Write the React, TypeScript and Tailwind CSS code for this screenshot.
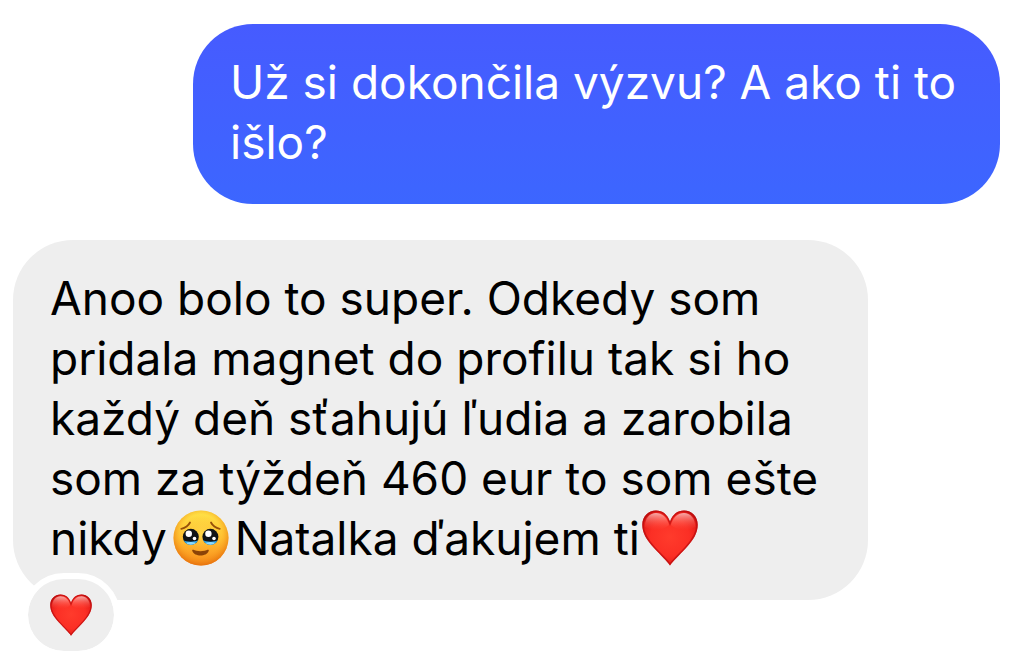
import { useId } from "react";
import type { ReactNode } from "react";

function HeartIcon({ className }: { className: string }) {
  const id = useId();
  const path =
    "M28 55.500C25 51 19 45.500 12 38C4.500 30 .3 23 .3 14.800C.3 6.500 6.500 .6 14 .6C20.500 .6 25.500 4.500 28 11.500C30.500 4.500 35.500 .6 42 .6C49.500 .6 55.700 6.500 55.700 14.800C55.700 23 51.500 30 44 38C37 45.500 31 51 28 55.500Z";
  return (
    <svg viewBox="0 0 56 56" className={className} role="img" aria-label="Srdce">
      <defs>
        <radialGradient id={`${id}body`} cx="50%" cy="48%" r="58%">
          <stop offset="0" stopColor="#ff3b2c" />
          <stop offset="0.6" stopColor="#fb2f25" />
          <stop offset="0.88" stopColor="#e81f1a" />
          <stop offset="1" stopColor="#c8110f" />
        </radialGradient>
        <linearGradient id={`${id}shine`} x1="0" y1="0" x2="0" y2="1">
          <stop offset="0" stopColor="#fff" stopOpacity="0.62" />
          <stop offset="0.5" stopColor="#ff9d92" stopOpacity="0.35" />
          <stop offset="1" stopColor="#ff5a4c" stopOpacity="0" />
        </linearGradient>
        <clipPath id={`${id}clip`}>
          <path d={path} />
        </clipPath>
      </defs>
      <path d={path} fill={`url(#${id}body)`} />
      <g clipPath={`url(#${id}clip)`}>
        <path d={path} fill="none" stroke="#b80c0e" strokeWidth="3" strokeOpacity="0.7" />
      </g>
      <path
        d="M3 17C2.500 8 8 3 14 3C20 3 25 7 27 15C22 20 10 22 3 17Z"
        fill={`url(#${id}shine)`}
      />
      <path
        d="M53 17C53.500 8 48 3 42 3C36 3 31 7 29 15C34 20 46 22 53 17Z"
        fill={`url(#${id}shine)`}
      />
    </svg>
  );
}

function TearfulFaceIcon({ className }: { className: string }) {
  const id = useId();
  return (
    <svg viewBox="0 0 56 56" className={className} role="img" aria-label="Dojatá tvár">
      <defs>
        <linearGradient id={`${id}skin`} x1="0" y1="0" x2="0" y2="1">
          <stop offset="0" stopColor="#ffe448" />
          <stop offset="0.5" stopColor="#ffc132" />
          <stop offset="1" stopColor="#fa8a1c" />
        </linearGradient>
        <radialGradient id={`${id}edge`} cx="50%" cy="44%" r="56%">
          <stop offset="0" stopColor="#fff36a" stopOpacity="0.35" />
          <stop offset="0.65" stopColor="#f9a51f" stopOpacity="0" />
          <stop offset="1" stopColor="#e5700c" stopOpacity="0.9" />
        </radialGradient>
        <clipPath id={`${id}left`}>
          <circle cx="17.800" cy="26.800" r="8" />
        </clipPath>
        <clipPath id={`${id}right`}>
          <circle cx="37.400" cy="26.800" r="8" />
        </clipPath>
      </defs>
      <circle cx="28" cy="28" r="27.500" fill={`url(#${id}skin)`} />
      <circle cx="28" cy="28" r="27.500" fill={`url(#${id}edge)`} />
      <g fill="none" stroke="#96500a" strokeWidth="1.800" strokeLinecap="round">
        <path d="M8.300 18.800C12 18 15.500 15.500 17 12.500" />
        <path d="M46.700 18.800C43 18 39.500 15.500 38 12.500" />
      </g>
      <g clipPath={`url(#${id}left)`}>
        <rect x="9" y="18" width="18" height="18" fill="#111416" />
        <path d="M9 29.500C13 32.500 22 32.500 27 29.500V36H9Z" fill="#2fa9ec" />
        <ellipse cx="17.800" cy="33.500" rx="4.500" ry="1.500" fill="#8fdcff" />
      </g>
      <g clipPath={`url(#${id}right)`}>
        <rect x="29" y="18" width="18" height="18" fill="#111416" />
        <path d="M29 29.500C33 32.500 42 32.500 46 29.500V36H29Z" fill="#2fa9ec" />
        <ellipse cx="37.400" cy="33.500" rx="4.500" ry="1.500" fill="#8fdcff" />
      </g>
      <g fill="#fff">
        <circle cx="15.800" cy="23.800" r="3.200" />
        <circle cx="21.500" cy="28.500" r="1.800" />
        <circle cx="35.400" cy="23.800" r="3.200" />
        <circle cx="41" cy="28.500" r="1.800" />
      </g>
      <path
        d="M20.500 39.800C23 41.600 32 41.600 34.500 39.800C35.400 39.300 36.200 40 35.700 41C33.500 47 21.500 47 19.300 41C18.800 40 19.600 39.300 20.500 39.800Z"
        fill="#8b4307"
      />
    </svg>
  );
}

function Bubble({ className, children }: { className: string; children: ReactNode }) {
  return (
    <p className={`rounded-[60px] px-[37px] pt-7 pb-8 text-[46px] leading-[60px] ${className}`}>
      {children}
    </p>
  );
}

export default function App() {
  return (
    <main className="flex min-h-screen flex-col bg-white pt-6 pr-[10px] pb-5 pl-[13px] font-['Inter',sans-serif]">
      <Bubble className="max-w-[807px] self-end bg-linear-to-b from-[#465bff] to-[#3c66ff] text-white">
        Už si dokončila výzvu? A ako ti to išlo?
      </Bubble>
      <div className="mt-9 flex max-w-[855px] flex-col items-start">
        <Bubble className="w-full bg-[#eeeeee] text-black">
          Anoo bolo to super. Odkedy som pridala magnet do profilu tak si ho každý deň sťahujú ľudia a
          zarobila som za týždeň 460 eur to som ešte nikdy
          <TearfulFaceIcon className="mx-1.5 inline-block size-14 align-[-11px]" />
          Natalka ďakujem ti
          <HeartIcon className="ml-0.5 inline-block size-14 align-[-11px]" />
        </Bubble>
        <button
          type="button"
          aria-label="Reakcia: srdce"
          className="-mt-[27px] ml-[9px] flex items-center justify-center rounded-[42px] border-6 border-white bg-[#eeeeee] bg-clip-padding px-[22px] py-[15px]"
        >
          <HeartIcon className="size-[42px]" />
        </button>
      </div>
    </main>
  );
}
